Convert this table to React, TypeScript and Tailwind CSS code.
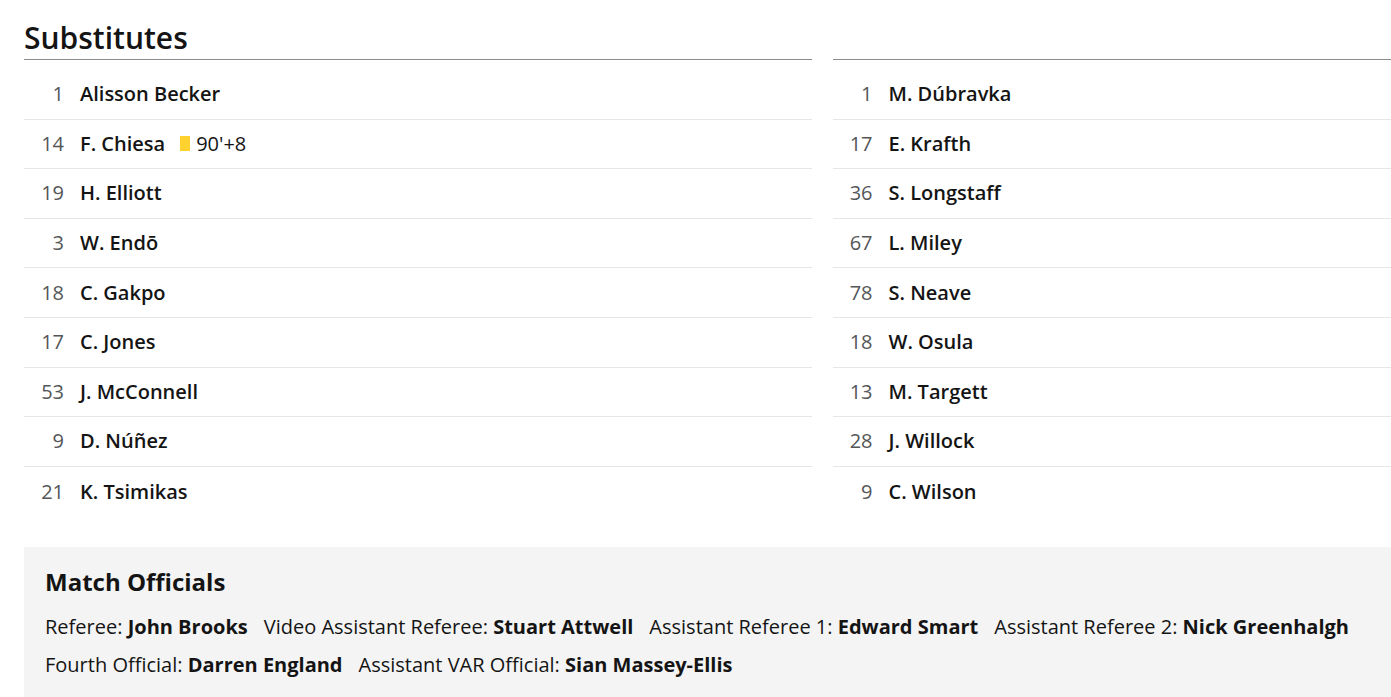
import React from "react";

type Player = {
  num: number;
  name: string;
  card?: string;
};

const home: Player[] = [
  { num: 1, name: "Alisson Becker" },
  { num: 14, name: "F. Chiesa", card: "90'+8" },
  { num: 19, name: "H. Elliott" },
  { num: 3, name: "W. Endō" },
  { num: 18, name: "C. Gakpo" },
  { num: 17, name: "C. Jones" },
  { num: 53, name: "J. McConnell" },
  { num: 9, name: "D. Núñez" },
  { num: 21, name: "K. Tsimikas" },
];

const away: Player[] = [
  { num: 1, name: "M. Dúbravka" },
  { num: 17, name: "E. Krafth" },
  { num: 36, name: "S. Longstaff" },
  { num: 67, name: "L. Miley" },
  { num: 78, name: "S. Neave" },
  { num: 18, name: "W. Osula" },
  { num: 13, name: "M. Targett" },
  { num: 28, name: "J. Willock" },
  { num: 9, name: "C. Wilson" },
];

const officials = [
  { role: "Referee", name: "John Brooks" },
  { role: "Video Assistant Referee", name: "Stuart Attwell" },
  { role: "Assistant Referee 1", name: "Edward Smart" },
  { role: "Assistant Referee 2", name: "Nick Greenhalgh" },
  { role: "Fourth Official", name: "Darren England" },
  { role: "Assistant VAR Official", name: "Sian Massey-Ellis" },
];

const PlayerList = ({ players }: { players: Player[] }) => (
  <ul className="pt-[10px]">
    {players.map((p, i) => (
      <li
        key={p.name}
        className={`
          flex items-center
          h-[49.6px]
          ${i < players.length - 1 ? "border-b border-[#e6e6e6]" : ""}
        `}
      >
        <span className="w-[40px] text-right text-[#545658]">{p.num}</span>
        <span className="ml-4 font-semibold text-[#141414]">{p.name}</span>
        {p.card && (
          <span className="flex items-center ml-[15px] text-[#141414]">
            <span className="w-[10px] h-[15px] bg-[#ffd230] mr-[6px]" />
            {p.card}
          </span>
        )}
      </li>
    ))}
  </ul>
);

export default function App() {
  return (
    <div
      className="w-[1391px] h-[697px] overflow-hidden bg-white text-[20px]"
      style={{ fontFamily: '"Open Sans", "Noto Sans", sans-serif' }}
    >
      <div className="w-[1620px] pl-6">
        <div className="flex gap-[21px]">
          <section className="w-[788px]">
            <h2 className="h-[60px] pt-[16px] text-[30px] leading-[44px] font-semibold text-[#141414] border-b border-[#8c8c8c]">
              Substitutes
            </h2>
            <PlayerList players={home} />
          </section>
          <section className="w-[788px]">
            <div className="h-[60px] border-b border-[#8c8c8c]" />
            <PlayerList players={away} />
          </section>
        </div>

        <div className="mt-[31px] bg-[#f4f4f4] pl-[21px] pt-[18px] pb-8 h-[200px]">
          <h3 className="text-[24px] leading-[34px] font-bold text-[#141414]">
            Match Officials
          </h3>
          <p className="mt-[9px] w-[1345px] text-[20px] leading-[38px] text-[#141414]">
            {officials.map((o) => (
              <span key={o.role} className="mr-4 inline-block">
                {o.role}: <span className="font-bold">{o.name}</span>
              </span>
            ))}
          </p>
        </div>
      </div>
    </div>
  );
}
